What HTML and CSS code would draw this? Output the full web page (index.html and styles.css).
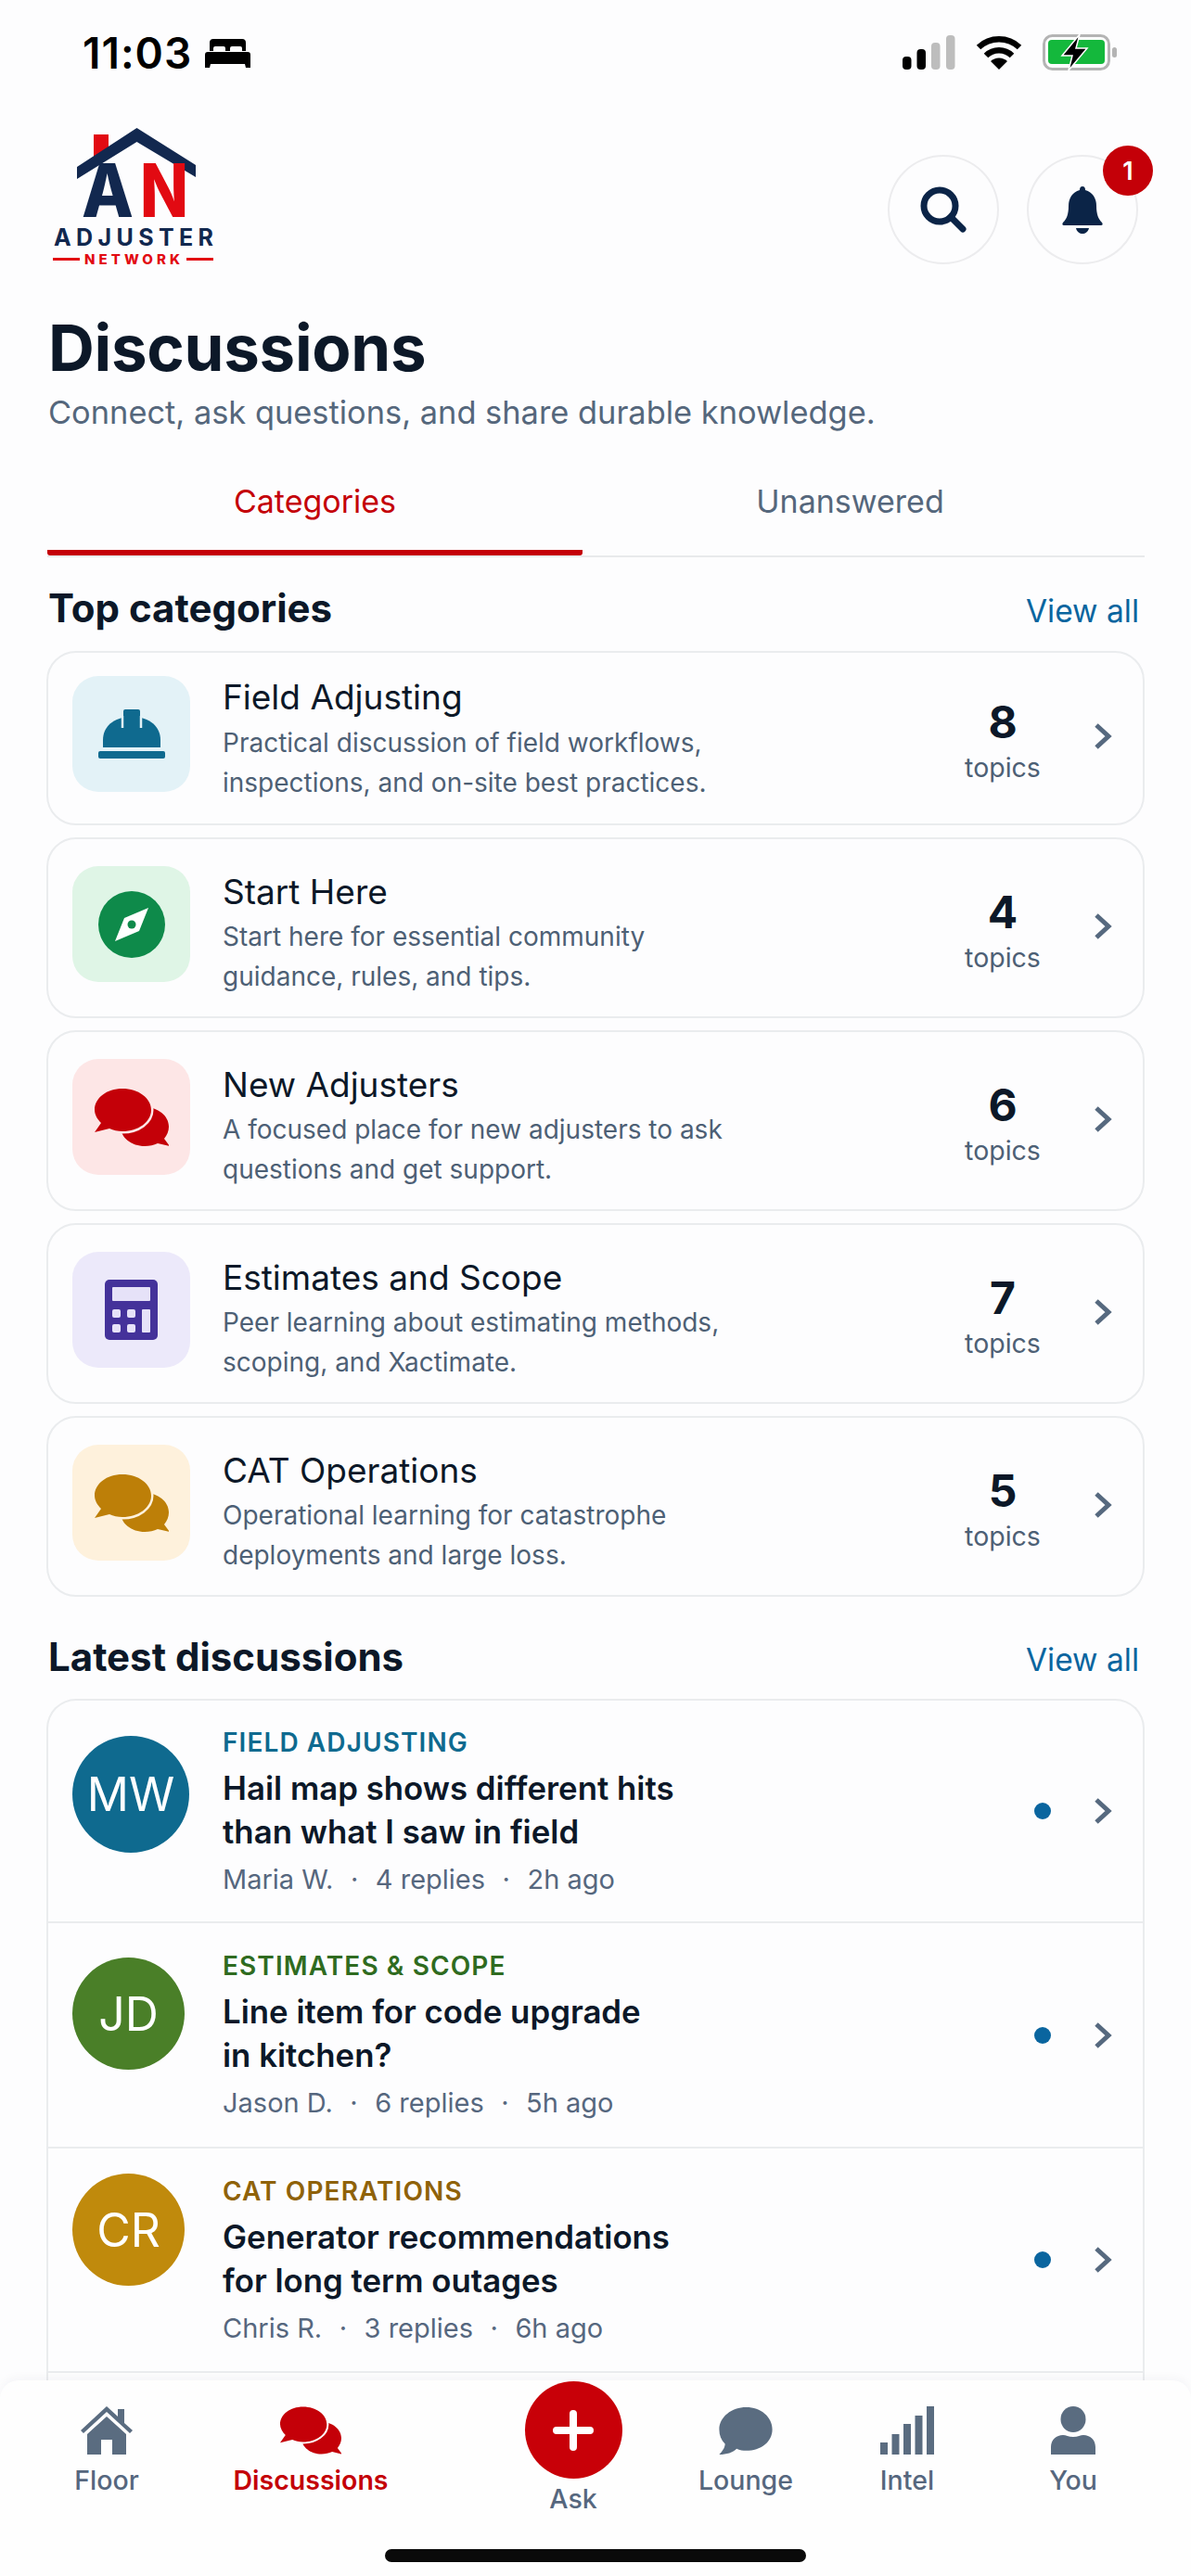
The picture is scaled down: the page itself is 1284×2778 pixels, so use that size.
FILE: index.html
```html
<!DOCTYPE html>
<html>
<head>
    <meta charset="utf-8">
    <title>Discussions</title>
    <link rel="stylesheet" href="styles.css">
</head>
<body>
    <svg class="defs" width="0" height="0">
        <symbol id="bubbles" viewBox="0 0 80 62">
            <path d="M54 20c14 0 26 9 26 21 0 5-2 9-5 13l6 8-13-3c-4 2-9 3-14 3-14 0-26-9-26-21s12-21 26-21z"/>
            <path class="bubble-front" d="M30 0c17 0 31 10 31 23S47 46 30 46c-5 0-10-1-14-3L0 47l7-10C3 33 0 28 0 23 0 10 13 0 30 0z"/>
        </symbol>
        <symbol id="chevron" viewBox="0 0 20 30">
            <path d="M3 3l13 12L3 27" fill="none" stroke="currentColor" stroke-width="5"/>
        </symbol>
    </svg>

    <div class="status">
        <div class="status-left">
            <span class="clock">11:03</span>
            <svg class="bed" viewBox="0 0 49 32">
                <path d="M5 14V5a4 4 0 0 1 4-4h31a4 4 0 0 1 4 4v9h-4v-3a2 2 0 0 0-2-2h-9a2 2 0 0 0-2 2v3h-5v-3a2 2 0 0 0-2-2h-9a2 2 0 0 0-2 2v3z"/>
                <path d="M3 15h43a3 3 0 0 1 3 3v14h-5l-1-4H6l-1 4H0V18a3 3 0 0 1 3-3z"/>
            </svg>
        </div>
        <div class="status-right">
            <svg class="signal" viewBox="0 0 57 37">
                <rect x="0" y="23" width="9.5" height="14" rx="4"/>
                <rect x="15.5" y="15" width="9.5" height="22" rx="4"/>
                <rect class="off" x="31" y="8" width="9.5" height="29" rx="4"/>
                <rect class="off" x="47" y="0" width="9.5" height="37" rx="4"/>
            </svg>
            <svg class="wifi" viewBox="0 0 50 37">
                <path d="M3 13a32 32 0 0 1 44 0M11 22a20 20 0 0 1 28 0" fill="none" stroke="#000" stroke-width="6.5"/>
                <path d="M25 37l-9-9a13 13 0 0 1 18 0z"/>
            </svg>
            <svg class="battery" viewBox="0 0 80 39">
                <rect x="1.5" y="1.5" width="70" height="36" rx="9" fill="none" stroke="#b4b4b4" stroke-width="3"/>
                <rect x="6" y="6" width="61" height="26" rx="4" fill="#14b83c"/>
                <rect x="75" y="14" width="5" height="11" rx="2.5" fill="#b4b4b4"/>
                <path d="M40 0L21 23h11l-4 16 20-24H36z" stroke="#fff" stroke-width="1.5"/>
            </svg>
        </div>
    </div>

    <div class="top">
        <svg class="logo" viewBox="0 0 175 150">
            <rect x="44" y="8" width="16" height="26" fill="#e20a12"/>
            <path d="M90.500 1L154 41v13L90.500 16 26 56V43z" fill="#12284f"/>
            <text class="logo-an" x="31" y="97" textLength="56" lengthAdjust="spacingAndGlyphs" fill="#12284f">A</text>
            <text class="logo-an" x="94" y="97" textLength="52" lengthAdjust="spacingAndGlyphs" fill="#e20a12">N</text>
            <text class="logo-name" x="1" y="128" textLength="172" fill="#12284f">ADJUSTER</text>
            <text class="logo-sub" x="34" y="148" textLength="103" fill="#e20a12">NETWORK</text>
            <rect x="0" y="141" width="29" height="3" fill="#e20a12"/>
            <rect x="144" y="141" width="29" height="3" fill="#e20a12"/>
        </svg>
        <div class="top-btns">
            <div class="round-btn">
                <svg class="ic-search" viewBox="0 0 50 50">
                    <circle cx="21" cy="21" r="17" fill="none" stroke="#0b2447" stroke-width="7"/>
                    <path d="M33 33l13 13" stroke="#0b2447" stroke-width="7" stroke-linecap="round"/>
                </svg>
            </div>
            <div class="round-btn">
                <svg class="ic-bell" viewBox="0 0 44 51">
                    <path d="M22 0c2 0 3 1.500 3 4 8 2 12 9 12 17 0 9 2 14 6 18 1 1 1 3-1 3H2c-2 0-2-2-1-3 4-4 6-9 6-18 0-8 4-15 12-17 0-2.500 1-4 3-4z" fill="#0b2447"/>
                    <path d="M15 45h14c-1 4-4 6-7 6s-6-2-7-6z" fill="#0b2447"/>
                </svg>
                <span class="badge">1</span>
            </div>
        </div>
    </div>

    <h1 class="page-title">Discussions</h1>
    <p class="page-sub">Connect, ask questions, and share durable knowledge.</p>

    <div class="tabs">
        <div class="tab active">Categories</div>
        <div class="tab">Unanswered</div>
    </div>

    <div class="sec-head">
        <h2>Top categories</h2>
        <span class="view-all">View all</span>
    </div>

    <div class="cats">
        <div class="cat">
            <div class="tile tile-blue">
                <svg class="ic-hat" viewBox="0 0 72 53">
                    <path d="M5 41v-8C5 19 16 8 36 8s31 11 31 25v8z" fill="#0f6a8f"/>
                    <rect x="27" y="0" width="18" height="16" rx="2" fill="#0f6a8f"/>
                    <path d="M26 7v13M46 7v13" stroke="#e3f2f7" stroke-width="2.5"/>
                    <rect x="0" y="45" width="72" height="8" rx="2" fill="#0f6a8f"/>
                </svg>
            </div>
            <div class="cat-text">
                <div class="cat-name">Field Adjusting</div>
                <div class="cat-desc">Practical discussion of field workflows,<br>inspections, and on-site best practices.</div>
            </div>
            <div class="count"><b>8</b><span>topics</span></div>
            <svg class="chev"><use href="#chevron"/></svg>
        </div>
        <div class="cat">
            <div class="tile tile-green">
                <svg class="ic-compass" viewBox="0 0 72 72">
                    <circle cx="36" cy="36" r="36" fill="#0e8a4a"/>
                    <path d="M54 18L44 43 18 54l10-25z" fill="#fff"/>
                    <circle cx="36" cy="36" r="4.500" fill="#0e8a4a"/>
                </svg>
            </div>
            <div class="cat-text">
                <div class="cat-name">Start Here</div>
                <div class="cat-desc">Start here for essential community<br>guidance, rules, and tips.</div>
            </div>
            <div class="count"><b>4</b><span>topics</span></div>
            <svg class="chev"><use href="#chevron"/></svg>
        </div>
        <div class="cat">
            <div class="tile tile-red">
                <svg class="ic-bubbles"><use href="#bubbles"/></svg>
            </div>
            <div class="cat-text">
                <div class="cat-name">New Adjusters</div>
                <div class="cat-desc">A focused place for new adjusters to ask<br>questions and get support.</div>
            </div>
            <div class="count"><b>6</b><span>topics</span></div>
            <svg class="chev"><use href="#chevron"/></svg>
        </div>
        <div class="cat">
            <div class="tile tile-purple">
                <svg class="ic-calc" viewBox="0 0 57 65">
                    <rect width="57" height="65" rx="5" fill="#44329a"/>
                    <rect x="8" y="8" width="41" height="15" rx="1" fill="#e6e2f8"/>
                    <rect x="8" y="32" width="9" height="9" rx="2" fill="#e6e2f8"/>
                    <rect x="24" y="32" width="9" height="9" rx="2" fill="#e6e2f8"/>
                    <rect x="40" y="32" width="9" height="25" rx="1" fill="#e6e2f8"/>
                    <rect x="8" y="48" width="9" height="9" rx="2" fill="#e6e2f8"/>
                    <rect x="24" y="48" width="9" height="9" rx="2" fill="#e6e2f8"/>
                </svg>
            </div>
            <div class="cat-text">
                <div class="cat-name">Estimates and Scope</div>
                <div class="cat-desc">Peer learning about estimating methods,<br>scoping, and Xactimate.</div>
            </div>
            <div class="count"><b>7</b><span>topics</span></div>
            <svg class="chev"><use href="#chevron"/></svg>
        </div>
        <div class="cat">
            <div class="tile tile-orange">
                <svg class="ic-bubbles"><use href="#bubbles"/></svg>
            </div>
            <div class="cat-text">
                <div class="cat-name">CAT Operations</div>
                <div class="cat-desc">Operational learning for catastrophe<br>deployments and large loss.</div>
            </div>
            <div class="count"><b>5</b><span>topics</span></div>
            <svg class="chev"><use href="#chevron"/></svg>
        </div>
    </div>

    <div class="sec-head sec-latest">
        <h2>Latest discussions</h2>
        <span class="view-all">View all</span>
    </div>

    <div class="threads">
        <div class="thread">
            <div class="avatar av-blue">MW</div>
            <div class="thread-text">
                <div class="thread-cat cat-blue">FIELD ADJUSTING</div>
                <div class="thread-title">Hail map shows different hits<br>than what I saw in field</div>
                <div class="thread-meta">Maria W.<i>·</i>4 replies<i>·</i>2h ago</div>
            </div>
            <span class="dot"></span>
            <svg class="chev"><use href="#chevron"/></svg>
        </div>
        <div class="thread">
            <div class="avatar av-green">JD</div>
            <div class="thread-text">
                <div class="thread-cat cat-green">ESTIMATES &amp; SCOPE</div>
                <div class="thread-title">Line item for code upgrade<br>in kitchen?</div>
                <div class="thread-meta">Jason D.<i>·</i>6 replies<i>·</i>5h ago</div>
            </div>
            <span class="dot"></span>
            <svg class="chev"><use href="#chevron"/></svg>
        </div>
        <div class="thread">
            <div class="avatar av-gold">CR</div>
            <div class="thread-text">
                <div class="thread-cat cat-gold">CAT OPERATIONS</div>
                <div class="thread-title">Generator recommendations<br>for long term outages</div>
                <div class="thread-meta">Chris R.<i>·</i>3 replies<i>·</i>6h ago</div>
            </div>
            <span class="dot"></span>
            <svg class="chev"><use href="#chevron"/></svg>
        </div>
    </div>

    <div class="nav">
        <div class="nav-item">
            <svg class="nav-ic" viewBox="0 0 60 52">
                <path d="M30 0L2 26l3 3 25-23 25 23 3-3-9-8V3h-7v8z" fill="#5a6c80"/>
                <path d="M30 11L9 30v22h15V36h12v16h15V30z" fill="#5a6c80"/>
            </svg>
            <span>Floor</span>
        </div>
        <div class="nav-item active">
            <svg class="nav-ic nav-bubbles"><use href="#bubbles"/></svg>
            <span>Discussions</span>
        </div>
        <div class="nav-item nav-ask">
            <div class="ask-btn">
                <svg viewBox="0 0 44 44" width="44" height="44"><path d="M22 4v36M4 22h36" stroke="#fff" stroke-width="8" stroke-linecap="round"/></svg>
            </div>
            <span>Ask</span>
        </div>
        <div class="nav-item">
            <svg class="nav-ic" viewBox="0 0 55 50">
                <path d="M28 1c15 0 27 10 27 23S43 46 28 46c-3 0-7-.500-10-2C14 48 8 50 0 50c3-3 6-7 6-11C2 35 0 30 0 24 0 11 13 1 28 1z" fill="#5a6c80"/>
            </svg>
            <span>Lounge</span>
        </div>
        <div class="nav-item">
            <svg class="nav-ic" viewBox="0 0 58 52">
                <rect x="0" y="39" width="8" height="13" fill="#5a6c80"/>
                <rect x="12.500" y="30" width="8" height="22" fill="#5a6c80"/>
                <rect x="25" y="19" width="8" height="33" fill="#5a6c80"/>
                <rect x="37.500" y="10" width="8" height="42" fill="#5a6c80"/>
                <rect x="50" y="0" width="8" height="52" fill="#5a6c80"/>
            </svg>
            <span>Intel</span>
        </div>
        <div class="nav-item">
            <svg class="nav-ic" viewBox="0 0 48 52">
                <ellipse cx="24" cy="14" rx="13.500" ry="14" fill="#5a6c80"/>
                <path d="M0 52V44c0-8 6-13 13-13 3 0 6 2 11 2s8-2 11-2c7 0 13 5 13 13v8z" fill="#5a6c80"/>
            </svg>
            <span>You</span>
        </div>
        <div class="home-bar"></div>
    </div>
</body>
</html>
```

FILE: styles.css
```css
html,
body {
    margin: 0;
    padding: 0;
}
body {
    width: 1284px;
    height: 2778px;
    overflow: hidden;
    position: relative;
    background-color: #fdfdfe;
    font-family: Inter, "Liberation Sans", sans-serif;
    color: #0c1828;
}
.defs {
    position: absolute;
}
.bubble-front {
    stroke: var(--gap);
    stroke-width: 5;
    paint-order: stroke;
}

/* status bar */
.status {
    height: 113px;
    padding: 0 80px 0 89px;
    display: flex;
    justify-content: space-between;
    align-items: center;
}
.status-left {
    display: flex;
    align-items: center;
    gap: 14px;
}
.clock {
    font-size: 46px;
    font-weight: 600;
    letter-spacing: 1px;
    color: #000;
}
.bed {
    width: 49px;
    height: 32px;
}
.status-right {
    display: flex;
    align-items: center;
    gap: 22px;
}
.signal {
    width: 57px;
    height: 37px;
}
.signal .off {
    fill: #bdbdbd;
}
.wifi {
    width: 50px;
    height: 37px;
}
.battery {
    width: 80px;
    height: 39px;
}

/* logo + round buttons */
.top {
    height: 148px;
    margin-top: 24px;
    padding: 0 57px;
    display: flex;
    justify-content: space-between;
    align-items: flex-end;
}
.logo {
    width: 175px;
    height: 150px;
    margin-bottom: -2px;
    overflow: visible;
}
.logo-an {
    font-size: 80px;
    font-weight: 800;
}
.logo-name {
    font-size: 25px;
    font-weight: 700;
}
.logo-sub {
    font-size: 15px;
    font-weight: 800;
}
.top-btns {
    display: flex;
    gap: 30px;
}
.round-btn {
    width: 120px;
    height: 118px;
    box-sizing: border-box;
    border: 2px solid #ececee;
    border-radius: 50%;
    display: flex;
    align-items: center;
    justify-content: center;
    position: relative;
}
.ic-search {
    width: 50px;
    height: 50px;
}
.ic-bell {
    width: 44px;
    height: 51px;
}
.badge {
    position: absolute;
    top: -12px;
    right: -18px;
    width: 54px;
    height: 54px;
    border-radius: 50%;
    background-color: #c40008;
    color: #fff;
    font-size: 27px;
    font-weight: 600;
    display: flex;
    align-items: center;
    justify-content: center;
}

/* heading */
.page-title {
    margin: 60px 0 0 52px;
    font-size: 69px;
    line-height: 60px;
    font-weight: 700;
    letter-spacing: -0.3px;
}
.page-sub {
    margin: 19px 0 0 52px;
    font-size: 34.4px;
    line-height: 42px;
    color: #55677c;
}

/* tabs */
.tabs {
    margin: 47px 50px 0 51px;
    height: 86px;
    display: flex;
    border-bottom: 2px solid #e8eaec;
}
.tab {
    width: 577px;
    height: 86px;
    box-sizing: border-box;
    text-align: center;
    font-size: 34px;
    line-height: 40px;
    padding-top: 8px;
    color: #55677c;
}
.tab.active {
    color: #c40008;
    border-bottom: 6px solid #c40008;
    border-radius: 0 0 3px 3px;
}

.sec-head {
    margin-top: 31px;
    padding: 0 56px 0 52px;
    display: flex;
    justify-content: space-between;
    align-items: center;
}
.sec-head h2 {
    margin: 0;
    font-size: 42px;
    line-height: 48px;
    font-weight: 700;
}
.view-all {
    margin-top: 6px;
    font-size: 33.5px;
    color: #0a659f;
}
.sec-latest {
    margin-top: 41px;
}

/* category cards */
.cats {
    margin: 22px 50px 0;
    display: flex;
    flex-direction: column;
    gap: 13px;
}
.cat {
    height: 195px;
    box-sizing: border-box;
    padding: 29px 33px 0 26px;
    border: 2px solid #eaecee;
    border-radius: 32px;
    display: flex;
    align-items: flex-start;
}
.cat:first-child {
    height: 188px;
    padding-top: 25px;
}
.tile {
    width: 127px;
    height: 125px;
    border-radius: 28px;
    display: flex;
    align-items: center;
    justify-content: center;
    flex-shrink: 0;
}
.tile-blue { background-color: #e3f2f7; }
.tile-green { background-color: #dff5e6; }
.tile-red { background-color: #fde6e6; color: #c40008; --gap: #fde6e6; }
.tile-purple { background-color: #ece9fa; }
.tile-orange { background-color: #fef1dc; color: #bd7f08; --gap: #fef1dc; }
.ic-hat {
    width: 72px;
    height: 53px;
}
.ic-compass {
    width: 72px;
    height: 72px;
}
.ic-bubbles {
    width: 80px;
    height: 62px;
    fill: currentColor;
}
.ic-calc {
    width: 57px;
    height: 65px;
}
.cat-text {
    margin-left: 35px;
}
.cat-name {
    font-size: 37px;
    line-height: 44px;
    margin-top: 6px;
}
.cat-desc {
    font-size: 28px;
    line-height: 43px;
    margin-top: 5px;
    color: #4d6075;
}
.cat:first-child .cat-name {
    margin-top: 1px;
}
.cat:first-child .cat-desc {
    margin-top: 6px;
}
.count {
    margin-left: auto;
    width: 100px;
    padding-top: 20px;
    display: flex;
    flex-direction: column;
    align-items: center;
}
.count b {
    font-size: 48px;
    line-height: 60px;
    font-weight: 700;
}
.count span {
    margin-top: 1px;
    font-size: 28.5px;
    line-height: 36px;
    color: #4d6075;
}
.chev {
    width: 20px;
    height: 30px;
    color: #56697f;
    flex-shrink: 0;
}
.cat .chev {
    margin: 50px 0 0 48px;
}

/* latest threads */
.threads {
    margin: 21px 50px 0;
    border: 2px solid #eaecee;
    border-bottom: 0;
    border-radius: 32px 32px 0 0;
    padding-bottom: 60px;
}
.thread {
    height: 241px;
    padding: 0 33px 0 26px;
    border-bottom: 2px solid #eaecee;
    display: flex;
    align-items: center;
}
.thread:first-child {
    height: 238px;
}
.thread:last-child {
    height: 240px;
}
.avatar {
    width: 121px;
    height: 121px;
    border-radius: 50%;
    color: #fff;
    font-size: 50px;
    display: flex;
    align-items: center;
    justify-content: center;
    flex-shrink: 0;
    align-self: flex-start;
    margin-top: 37px;
}
.av-blue { background-color: #0f6a8f; width: 126px; height: 126px; margin-top: 38px; }
.av-green { background-color: #4a7f28; }
.av-gold { background-color: #c08a0c; margin-top: 27px; }
.thread-text {
    margin-left: 36px;
    padding-top: 2px;
    flex: 1;
}
.av-green + .thread-text,
.av-gold + .thread-text {
    margin-left: 41px;
}
.thread-cat {
    font-size: 28px;
    line-height: 34px;
    font-weight: 600;
    letter-spacing: 1.1px;
}
.cat-blue { color: #0f6a8f; }
.cat-green { color: #2f6b20; }
.cat-gold { color: #8f6209; }
.thread-title {
    margin-top: 9px;
    font-size: 34.8px;
    line-height: 47px;
    font-weight: 600;
}
.thread-meta {
    margin-top: 8px;
    font-size: 29px;
    line-height: 40px;
    color: #56677e;
}
.thread-meta i {
    font-style: normal;
    padding: 0 18.5px;
}
.dot {
    width: 18px;
    height: 18px;
    border-radius: 50%;
    background-color: #0a659f;
    margin-right: 46px;
}

/* bottom nav */
.nav {
    position: absolute;
    left: 0;
    right: 0;
    bottom: 0;
    height: 211px;
    background-color: #fefefe;
    border-radius: 20px 20px 0 0;
    box-shadow: 0 -4px 10px rgba(20, 30, 50, 0.03);
    display: grid;
    grid-template-columns: 230px 210px 296px 136px 212px 146px;
    align-items: start;
    padding-top: 28px;
    box-sizing: border-box;
}
.nav-item {
    display: flex;
    flex-direction: column;
    align-items: center;
    font-size: 28.5px;
    line-height: 34px;
    font-weight: 500;
    color: #56677e;
    gap: 11px;
}
.nav-item.active {
    color: #c40008;
    font-weight: 600;
    --gap: #fefefe;
}
.nav-ic {
    height: 52px;
    width: 60px;
}
.nav-bubbles {
    width: 66px;
    fill: currentColor;
}
.nav-ask {
    padding-left: 60px;
    gap: 5px;
    margin-top: -27px;
}
.ask-btn {
    width: 105px;
    height: 105px;
    border-radius: 50%;
    background-color: #c80008;
    display: flex;
    align-items: center;
    justify-content: center;
}
.home-bar {
    position: absolute;
    left: 415px;
    top: 182px;
    width: 454px;
    height: 14px;
    border-radius: 7px;
    background-color: #0a0a0a;
}
```
